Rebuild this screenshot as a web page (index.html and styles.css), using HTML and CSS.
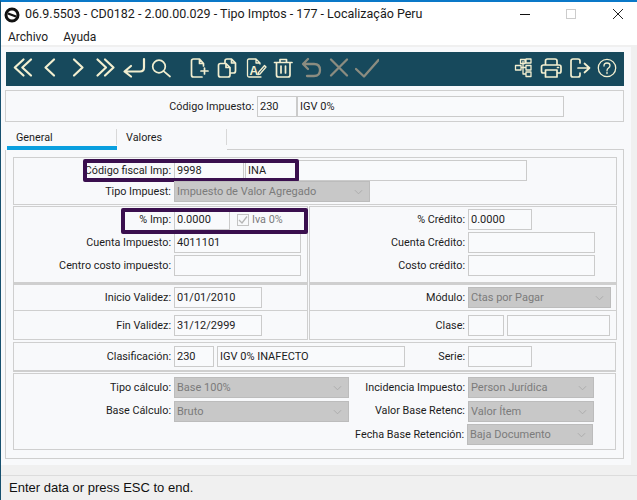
FILE: index.html
```html
<!DOCTYPE html>
<html lang="es">
<head>
<meta charset="utf-8">
<title>Tipo Imptos</title>
<link rel="stylesheet" href="styles.css">
</head>
<body>
<div class="window">
  <header class="titlebar">
    <svg class="logo" width="16" height="16" viewBox="0 0 16 16"><circle cx="8" cy="8" r="6" fill="none" stroke="#111" stroke-width="3"/><path d="M4 6.5 L12 9.5" stroke="#111" stroke-width="2.4"/></svg>
    <span class="title">06.9.5503 - CD0182 - 2.00.00.029 - Tipo Imptos - 177 - Localização Peru</span>
    <div class="winctl">
      <svg width="46" height="20" viewBox="0 0 46 20"><path d="M0 10.5H10" stroke="#111" stroke-width="1"/></svg>
      <svg width="46" height="20" viewBox="0 0 46 20"><rect x="0.5" y="5.5" width="9" height="9" fill="none" stroke="#ccc"/></svg>
      <svg width="16" height="20" viewBox="0 0 16 20"><path d="M1 5L11 15M11 5L1 15" stroke="#222" stroke-width="1"/></svg>
    </div>
  </header>
  <nav class="menubar"><span>Archivo</span><span>Ayuda</span></nav>
  <main class="main">
    <div class="toolbar">
      <div class="tgroup">
        <div class="cell"><svg class="ico" viewBox="0 0 24 24"><path d="M13.5 3.5L4.8 11.5L13.5 19.5M21 3.5L12.3 11.5L21 19.5"/></svg></div>
        <div class="cell"><svg class="ico" viewBox="0 0 24 24"><path d="M16 3.5L7.5 11.5L16 19.5"/></svg></div>
        <div class="cell"><svg class="ico" viewBox="0 0 24 24"><path d="M8 3.5L16.5 11.5L8 19.5"/></svg></div>
        <div class="cell"><svg class="ico" viewBox="0 0 24 24"><path d="M3.5 3.5L12 11.5L3.5 19.5M11 3.5L19.5 11.5L11 19.5"/></svg></div>
        <div class="cell"><svg class="ico" viewBox="0 0 24 24"><path d="M22 3V11.5Q22 15.5 18 15.5H3M9 10L2.5 15.5L9 20.5"/></svg></div>
        <div class="cell"><svg class="ico thin" viewBox="0 0 24 24"><circle cx="9" cy="10.5" r="6.3"/><path d="M13.6 15.2L20 20.5"/></svg></div>
      </div>
      <div class="tgroup second">
        <div class="cell"><svg class="ico thin" viewBox="0 0 24 24"><path d="M16.5 10V7.5L12.5 3H6.5Q4.5 3 4.5 5V19Q4.5 21 6.5 21H15M12.5 3V7.5H16.5M17.5 12V18M14 15H21"/></svg></div>
        <div class="cell"><svg class="ico thin" viewBox="0 0 24 24"><path d="M10 6.5V5Q10 3 12 3H16.5L20.5 7V15Q20.5 17 18.5 17H15.5M16.5 3V7H20.5"/><path d="M5.5 7.5H11L15 11.5V19Q15 21 13 21H5.5Q3.5 21 3.5 19V9.5Q3.5 7.5 5.5 7.5ZM11 7.5V11.5H15"/></svg></div>
        <div class="cell"><svg class="ico hair" viewBox="0 0 24 24"><path d="M17 8V7L13 3H6Q4.5 3 4.5 4.5V19.5Q4.5 21 6 21H18M13 3V7H17M15.5 16.5L21.5 9.5L23 11L17 18L15 18.5Z"/><text class="ico-a" x="6.5" y="18.5">A</text></svg></div>
        <div class="cell"><svg class="ico thin" viewBox="0 0 24 24"><path d="M3.5 6.5H21M9 6V3.5H15.5V6M5.5 7V19Q5.5 21 7.5 21H17Q19 21 19 19V7M10 10V17M14.5 10V17"/></svg></div>
        <div class="cell"><svg class="ico off" viewBox="0 0 24 24"><path d="M9 3L4 8L9 13M4.5 8H15Q21 8 21 14Q21 20 15 20H8"/></svg></div>
        <div class="cell"><svg class="ico off" viewBox="0 0 24 24"><path d="M4 3.5L20 19.5M20 3.5L4 19.5"/></svg></div>
        <div class="cell"><svg class="ico off" viewBox="0 0 24 24"><path d="M1 13L9 20.5L23.5 4"/></svg></div>
      </div>
      <div class="tgroup end">
        <div class="cell"><svg class="ico hair" viewBox="0 0 24 24"><path d="M9.5 3.5H14V7.5H9.5ZM15 3H20V7H15ZM4.5 9.5H10V14H4.5ZM15 9.5H20V14H15ZM15 16H20V20.5H15ZM12 5.5V18H15M10 11.5H15"/></svg></div>
        <div class="cell"><svg class="ico thin" viewBox="0 0 24 24"><path d="M6.5 9V5Q6.5 3 8.5 3H16Q18 3 18 5V9M5.5 17H4Q2.5 17 2.5 15V11Q2.5 9 4.5 9H20Q22 9 22 11V15Q22 17 20.5 17H19M6.5 14H18V21H6.5Z"/><path d="M18.5 11.5H19.5"/></svg></div>
        <div class="cell"><svg class="ico thin" viewBox="0 0 24 24"><path d="M13 7V5Q13 3 11 3H6Q4 3 4 5V19Q4 21 6 21H11Q13 21 13 19V17M11 12H22M17.5 7.5L22.5 12L17.5 16.5"/></svg></div>
        <div class="cell"><svg class="ico hair" viewBox="0 0 24 24"><circle cx="12" cy="12" r="8.7"/><path d="M9 10Q9 7 12 7Q15 7 15 9.5Q15 11 13.5 12Q12 13 12 14.5M12 16.2V17.5"/></svg></div>
      </div>
    </div>

    <section class="box head">
      <label class="lbl head-lbl">Código Impuesto:</label>
      <div class="inp w40">230</div>
      <div class="inp w267">IGV 0%</div>
    </section>

    <div class="tabs">
      <div class="tab active">General</div>
      <div class="tab sep">Valores</div>
      <div class="tab-fill"></div>
    </div>

    <section class="panel">
      <div class="mark m1"></div>
      <div class="mark m2"></div>

      <div class="frame f1">
        <div class="row">
          <label class="lbl">Código fiscal Imp:</label>
          <div class="inp w70">9998</div>
          <div class="inp w282 ml1">INA</div>
        </div>
        <div class="row">
          <label class="lbl">Tipo Impuest:</label>
          <div class="sel w196">Impuesto de Valor Agregado<svg class="chev" viewBox="0 0 10 6"><path d="M1 1L5 5L9 1"/></svg></div>
        </div>
      </div>

      <div class="cols">
        <div class="frame stack">
          <div class="row">
            <label class="lbl">% Imp:</label>
            <div class="inp w56">0.0000</div>
            <span class="check"><svg width="12" height="12" viewBox="0 0 12 12"><rect x="0.5" y="0.5" width="11" height="11" fill="none" stroke="#c4c4c4"/><path d="M2 6L5 9L10 2.5" fill="none" stroke="#b5b5b5" stroke-width="1.3"/></svg>Iva 0%</span>
          </div>
          <div class="row">
            <label class="lbl">Cuenta Impuesto:</label>
            <div class="inp w127">4011101</div>
          </div>
          <div class="row">
            <label class="lbl">Centro costo impuesto:</label>
            <div class="inp w127"></div>
          </div>
        </div>
        <div class="frame stack">
          <div class="row">
            <label class="lbl r">% Crédito:</label>
            <div class="inp w64">0.0000</div>
          </div>
          <div class="row">
            <label class="lbl r">Cuenta Crédito:</label>
            <div class="inp w127"></div>
          </div>
          <div class="row">
            <label class="lbl r">Costo crédito:</label>
            <div class="inp w127"></div>
          </div>
        </div>
      </div>

      <div class="cols">
        <div class="frame split">
          <div class="row pad">
            <label class="lbl">Inicio Validez:</label>
            <div class="inp w88">01/01/2010</div>
          </div>
          <div class="row pad">
            <label class="lbl">Fin Validez:</label>
            <div class="inp w88">31/12/2999</div>
          </div>
        </div>
        <div class="frame split">
          <div class="row pad">
            <label class="lbl r">Módulo:</label>
            <div class="sel w143">Ctas por Pagar<svg class="chev" viewBox="0 0 10 6"><path d="M1 1L5 5L9 1"/></svg></div>
          </div>
          <div class="row pad">
            <label class="lbl r">Clase:</label>
            <div class="inp w36">&nbsp;</div>
            <div class="inp w103 ml3"></div>
          </div>
        </div>
      </div>

      <div class="frame f4">
        <div class="row">
          <label class="lbl">Clasificación:</label>
          <div class="inp w40">230</div>
          <div class="inp w188 ml3">IGV 0% INAFECTO</div>
          <label class="lbl serie">Serie:</label>
          <div class="inp w64"></div>
        </div>
      </div>

      <div class="frame f5">
        <div class="row">
          <label class="lbl">Tipo cálculo:</label>
          <div class="sel w175">Base 100%<svg class="chev" viewBox="0 0 10 6"><path d="M1 1L5 5L9 1"/></svg></div>
          <label class="lbl wide">Incidencia Impuesto:</label>
          <div class="sel w126">Person Jurídica<svg class="chev" viewBox="0 0 10 6"><path d="M1 1L5 5L9 1"/></svg></div>
        </div>
        <div class="row">
          <label class="lbl">Base Cálculo:</label>
          <div class="sel w175">Bruto<svg class="chev" viewBox="0 0 10 6"><path d="M1 1L5 5L9 1"/></svg></div>
          <label class="lbl wide">Valor Base Retenc:</label>
          <div class="sel w126">Valor Ítem<svg class="chev" viewBox="0 0 10 6"><path d="M1 1L5 5L9 1"/></svg></div>
        </div>
        <div class="row right">
          <label class="lbl wide">Fecha Base Retención:</label>
          <div class="sel w126">Baja Documento<svg class="chev" viewBox="0 0 10 6"><path d="M1 1L5 5L9 1"/></svg></div>
        </div>
      </div>
    </section>
  </main>
  <div class="gap-band"></div>
  <footer class="status">Enter data or press ESC to end.</footer>
</div>
</body>
</html>
```
FILE: styles.css
```css
* { box-sizing: border-box; }
html, body { margin: 0; padding: 0; }
body {
  width: 637px; height: 500px; overflow: hidden;
  font-family: Roboto, "Open Sans", sans-serif;
  font-size: 10.8px; color: #1c1c1c;
}
.window {
  width: 637px; height: 500px; display: flex; flex-direction: column;
  background: #f0f0f0; border-left: 1px solid #17506f; border-top: 2px solid #0a78c8;
}
.titlebar {
  height: 24px; background: #fff; display: flex; align-items: center;
  padding-left: 3px; flex: none;
}
.logo { flex: none; margin-top: 1px; }
.title { margin-left: 5px; margin-top: -1px; font-size: 12.5px; color: #1a1a1a; white-space: nowrap; }
.winctl { margin-left: auto; display: flex; padding-right: 9px; }
.menubar {
  height: 19px; background: #fff; display: flex; gap: 15px; padding: 2px 0 0 7px;
  align-items: center; flex: none; font-size: 12px;
}
.main {
  height: 418px; margin: 2px 6px 0 0; padding: 5px 7px 0 4px; background: #f8f9fb; flex: none;
}
.toolbar {
  height: 34px; margin-left: 1px; background: #17495c; display: flex; align-items: flex-start;
  padding: 4px 3px 0 2px;
}
.tgroup { display: flex; }
.second { margin-left: 9px; }
.end { margin-left: auto; }
.cell { width: 28px; height: 24px; display: flex; justify-content: center; }
.ico { width: 24px; height: 24px; fill: none; stroke: #f3efd0; stroke-width: 2.2; stroke-linecap: round; stroke-linejoin: round; }
.ico.thin { stroke-width: 1.7; }
.ico.hair { stroke-width: 1.3; }
.ico.off { stroke: #8b8c80; stroke-width: 2.3; }
.ico-a { font: bold 12px "Liberation Sans", sans-serif; fill: #f3efd0; stroke: none; }

.box { border: 1px solid #cfcfcf; }
.head { height: 32px; margin-top: 4px; display: flex; align-items: center; padding-top: 1px; }
.lbl { flex: none; width: 157px; margin-right: 3px; text-align: right; white-space: nowrap; margin-top: -1px; }
.head-lbl { width: 248px; }
.lbl.r { width: 155px; }
.inp {
  flex: none; height: 21px; border: 1px solid #cbcbcb; padding: 0 2px; line-height: 20px;
  font-size: 11px; white-space: nowrap; background: #f9fafc;
}
.sel {
  position: relative; flex: none; height: 21px; background: #c8c8c8; border: 1px solid #bcbcbc;
  color: #7b7b7b; padding: 0 2px; line-height: 20px; font-size: 11px; white-space: nowrap;
}
.chev { position: absolute; right: 6px; top: 7px; width: 9px; height: 6px; fill: none; stroke: #a9a9a9; stroke-width: 1; }
.w36 { width: 36px; } .w40 { width: 40px; } .w56 { width: 56px; } .w64 { width: 64px; }
.w70 { width: 70px; } .w88 { width: 88px; } .w103 { width: 103px; } .w126 { width: 126px; }
.w127 { width: 127px; } .w143 { width: 143px; } .w175 { width: 175px; } .w188 { width: 188px; }
.w196 { width: 196px; } .w267 { width: 267px; } .w282 { width: 282px; }
.ml1 { margin-left: 1px; } .ml3 { margin-left: 3px; }

.tabs { height: 28px; display: flex; align-items: flex-end; padding-left: 2px; }
.tab { width: 110px; height: 28px; padding: 9px 0 0 9px; }
.tab.active { border-bottom: 4px solid #0a9fdf; }
.tab.sep { position: relative; }
.tab.sep::before, .tab.sep::after { content: ""; position: absolute; top: 7px; height: 16px; width: 1px; background: #d8d8d8; }
.tab.sep::before { left: -1px; }
.tab.sep::after { right: 0; }
.tab-fill { flex: 1; height: 1px; background: #cfcfcf; }

.panel {
  position: relative; height: 309px; border: 1px solid #cfcfcf; border-top: 0;
  padding: 7px 6px 0 7px;
}
.mark { position: absolute; border: 4px solid #3a0f4e; border-radius: 2px; }
.m1 { left: 77px; top: 9px; width: 216px; height: 23px; }
.m2 { left: 115px; top: 58px; width: 187px; height: 26px; }

.frame { border: 1px solid #cfcfcf; }
.row { display: flex; align-items: center; }
.f1 { height: 48px; padding-top: 2px; }
.cols { display: grid; grid-template-columns: 295px 1fr; column-gap: 1px; margin-top: 1px; }
.cols + .cols { margin-top: 0; }
.stack { height: 77px; padding-top: 2px; display: flex; flex-direction: column; gap: 2px; }
.split { height: 57px; border-top-width: 2px; }
.split .pad:first-child { border-bottom: 1px solid #cfcfcf; height: 26px; padding: 2px 0 2px; }
.split .pad:last-child { padding-top: 4px; }
.check { display: flex; align-items: center; gap: 3px; margin-left: 7px; color: #7b7b7b; }
.f4 { margin: 2px 1px 0 0; height: 30px; padding-top: 3px; border-bottom-width: 2px; }
.serie { width: 60px; }
.f5 { margin: 1px 1px 0 0; height: 77px; padding-top: 3px; display: flex; flex-direction: column; gap: 2.5px; }
.wide { width: 116px; }
.right { justify-content: flex-end; padding-right: 22px; }

.gap-band { height: 10px; flex: none; }
.status {
  flex: 1; border-top: 1px solid #dcdcdc; padding: 4px 0 0 8px;
  font-family: "Liberation Sans", sans-serif; font-size: 13px; color: #111;
}
```
